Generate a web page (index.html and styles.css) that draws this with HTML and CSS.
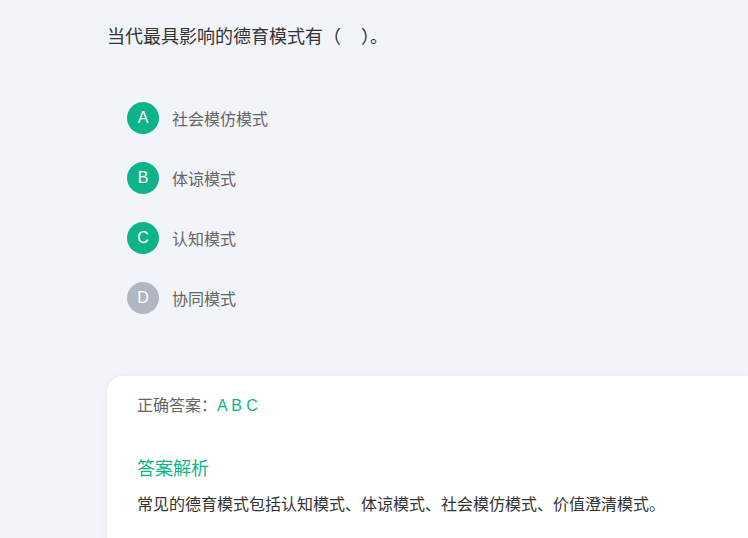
FILE: index.html
```html
<!DOCTYPE html>
<html lang="zh-CN">
<head>
    <meta charset="UTF-8">
    <title>题目</title>
    <link rel="stylesheet" href="styles.css">
</head>
<body>
    <div class="question">当代最具影响的德育模式有（&nbsp;&nbsp;&nbsp;&nbsp;）。</div>

    <ul class="options">
        <li class="option"><span class="mark on">A</span><span class="label">社会模仿模式</span></li>
        <li class="option"><span class="mark on">B</span><span class="label">体谅模式</span></li>
        <li class="option"><span class="mark on">C</span><span class="label">认知模式</span></li>
        <li class="option"><span class="mark">D</span><span class="label">协同模式</span></li>
    </ul>

    <div class="card">
        <p class="answer">正确答案：<span class="green">A B C</span></p>
        <h3 class="title">答案解析</h3>
        <p class="explain">常见的德育模式包括认知模式、体谅模式、社会模仿模式、价值澄清模式。</p>
    </div>
</body>
</html>
```
FILE: styles.css
```css
body {
    margin: 0;
    background: #f1f4f8;
    font-family: "Liberation Sans", "Noto Sans CJK SC", sans-serif;
    overflow: hidden;
}
.question {
    padding: 25px 0 0 107px;
    font-size: 18px;
    line-height: 24px;
    color: #333;
}
.options {
    list-style: none;
    margin: 0;
    padding: 53px 0 0 127px;
}
.option {
    display: flex;
    align-items: center;
    height: 32px;
    margin-bottom: 28px;
}
.mark {
    width: 32px;
    height: 32px;
    border-radius: 50%;
    background: #b1b7c1;
    color: #fff;
    font-size: 16px;
    display: flex;
    align-items: center;
    justify-content: center;
    margin-right: 13px;
}
.mark.on {
    background: #0fb38a;
}
.label {
    font-size: 16px;
    color: #666;
}
.card {
    margin: 62px 0 0 107px;
    background: #fff;
    border-radius: 16px 0 0 0;
    box-shadow: 0 0 6px rgba(0, 0, 0, 0.06);
    padding: 19px 30px 40px;
}
.answer {
    margin: 0;
    font-size: 16px;
    line-height: 22px;
    color: #666;
}
.green {
    color: #0fb38a;
}
.title {
    margin: 40px 0 0;
    font-size: 18px;
    font-weight: normal;
    line-height: 24px;
    color: #0fb38a;
}
.explain {
    margin: 12px 0 0;
    font-size: 16px;
    line-height: 24px;
    color: #333;
}
```
